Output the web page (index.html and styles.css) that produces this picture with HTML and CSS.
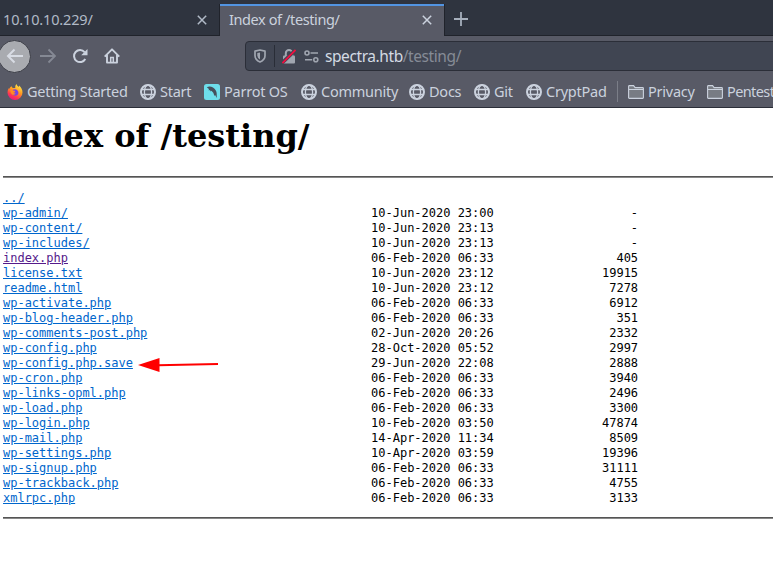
FILE: index.html
```html
<!DOCTYPE html>
<html lang="en">
<head>
<meta charset="utf-8">
<title>Index of /testing/</title>
<link rel="stylesheet" href="styles.css">
</head>
<body>
<svg width="0" height="0" class="defs">
  <symbol id="globe" viewBox="0 0 16 16"><g fill="none" stroke="currentColor"><circle cx="8" cy="8" r="7" stroke-width="2"/><ellipse cx="8" cy="8" rx="3.6" ry="7" stroke-width="1.3"/><path d="M2 5.5h12M2 10.5h12" stroke-width="1.4"/></g></symbol>
  <symbol id="folder" viewBox="0 0 16 16"><path d="M.6 13.8V2.400q0-.8.8-.8h4.200l1.500 2h7.500q.8 0 .8.8v9.400q0 .6-.8.6H1.400q-.8 0-.8-.6z" fill="#787c84" stroke="currentColor" stroke-width="1.1"/><path d="M1 5.500h14" fill="none" stroke="currentColor"/></symbol>
  <symbol id="close" viewBox="0 0 10 10"><path d="M.8.8l8.4 8.4M9.2.8L.8 9.2" stroke="currentColor" stroke-width="1.5"/></symbol>
</svg>
<header class="browser">
  <div class="tabs">
    <div class="tab"><span>10.10.10.229/</span><svg class="close"><use href="#close"/></svg></div>
    <div class="tab active"><span>Index of /testing/</span><svg class="close"><use href="#close"/></svg></div>
    <svg class="plus" viewBox="0 0 14 14"><path d="M7 0v14M0 7h14" stroke="currentColor" stroke-width="1.8"/></svg>
  </div>
  <div class="toolbar">
    <div class="back"><svg width="18" height="16" viewBox="0 0 18 16"><path d="M17 8H2M8.500 1.500L2 8l6.500 6.500" fill="none" stroke="currentColor" stroke-width="2"/></svg></div>
    <svg class="forward" viewBox="0 0 16 16"><path d="M0 8h15M8.500 1.500L15 8l-6.500 6.500" fill="none" stroke="currentColor" stroke-width="1.800"/></svg>
    <svg class="reload" viewBox="0 0 16 16"><path d="M12.600 4.200A6 6 0 1 0 13.300 11" fill="none" stroke="currentColor" stroke-width="2"/><path d="M15.500 1v6.300H9.200z" fill="currentColor"/></svg>
    <svg class="home" viewBox="0 0 16 16"><path d="M.7 8.600L8 1.300l7.300 7.300M3 7v7.600h10V7" fill="none" stroke="currentColor" stroke-width="1.900" stroke-linejoin="round"/><path d="M6.700 14V9.500h2.600v5" fill="none" stroke="currentColor" stroke-width="1.500"/></svg>
    <div class="url">
      <svg class="shield" viewBox="0 0 12 14"><path d="M1 2.200L6 1l5 1.200v4.500q0 4-5 6.300Q1 10.700 1 6.700z" fill="none" stroke="currentColor" stroke-width="1.700" stroke-linejoin="round"/><path d="M6 3.500v7q-2.700-1.500-2.700-4V4z" fill="currentColor"/></svg>
      <i class="divider"></i>
      <svg class="lock" viewBox="0 0 14 15"><path d="M3.800 7V4.300a3.200 3.200 0 0 1 6.400 0V7" fill="none" stroke="currentColor" stroke-width="2"/><rect x="1" y="6.500" width="12" height="8" rx="1" fill="currentColor"/><path d="M0 14L13.500 1" stroke="#414550" stroke-width="3.600"/><path d="M.4 14.200L13.600 1" stroke="#f20d40" stroke-width="1.800"/></svg>
      <svg class="perms" viewBox="0 0 15 13"><g fill="none" stroke="currentColor" stroke-width="1.600"><circle cx="3" cy="3" r="2"/><circle cx="11.800" cy="9.800" r="2"/><path d="M6.500 3H14M1 9.800h7.200"/></g></svg>
      <span class="address">spectra.htb<em>/testing/</em></span>
    </div>
  </div>
  <nav class="bookmarks">
    <a><svg viewBox="0 0 16 16"><defs><linearGradient id="fire" x1=".8" y1="0" x2=".3" y2="1"><stop stop-color="#fff44f"/><stop offset=".45" stop-color="#ff9820"/><stop offset=".75" stop-color="#ff3850"/><stop offset="1" stop-color="#e31587"/></linearGradient></defs><path d="M4.400 2.200L5.700 4.100q1.500-.4 2.500 0Q7.800 2 9.300 0q.8 2 2.600 3l.1-1.400q3.500 3 3.500 6.900A7.500 7.500 0 0 1 .5 8.500q0-2.700 1.600-4.700l.3 1.100q.7-2 2-2.700z" fill="url(#fire)"/><path d="M5 6.200q4-2.400 6 .7 1.300 3.200-1.400 4.600-3 .7-4.500-2.100 1.700.9 3-.7L5 7.700z" fill="#7542e5"/><path d="M3.200 6.300q2-1 3 .3l2.200.4q-.3 1.300-2.200 1.500.8 1.500 2.600.9-2 2.400-4.200.5-1.300-1.300-1.400-3.600z" fill="#ff8c22"/></svg>Getting Started</a>
    <a><svg><use href="#globe"/></svg>Start</a>
    <a><svg viewBox="0 0 16 16"><rect width="16" height="16" rx="2.500" fill="#6edeeb"/><path d="M2.800 3.200Q6 1.800 9 3.600q3.500 2.400 3.700 6l.1 4.400-1.700-3-.6 1Q9.600 8 7.400 6.700l-.8.7-.6-1.300-1.300.3.200-1.500z" fill="#45505c"/></svg>Parrot OS</a>
    <a><svg><use href="#globe"/></svg>Community</a>
    <a><svg><use href="#globe"/></svg>Docs</a>
    <a><svg><use href="#globe"/></svg>Git</a>
    <a><svg><use href="#globe"/></svg>CryptPad</a>
    <i class="separator"></i>
    <a><svg><use href="#folder"/></svg>Privacy</a>
    <a class="last"><svg><use href="#folder"/></svg>Pentest</a>
  </nav>
</header>
<main>
<h1>Index of /testing/</h1>
<hr>
<pre><a>../</a>
<a>wp-admin/</a>                                          10-Jun-2020 23:00                   -
<a>wp-content/</a>                                        10-Jun-2020 23:13                   -
<a>wp-includes/</a>                                       10-Jun-2020 23:13                   -
<a class="visited">index.php</a>                                          06-Feb-2020 06:33                 405
<a>license.txt</a>                                        10-Jun-2020 23:12               19915
<a>readme.html</a>                                        10-Jun-2020 23:12                7278
<a>wp-activate.php</a>                                    06-Feb-2020 06:33                6912
<a>wp-blog-header.php</a>                                 06-Feb-2020 06:33                 351
<a>wp-comments-post.php</a>                               02-Jun-2020 20:26                2332
<a>wp-config.php</a>                                      28-Oct-2020 05:52                2997
<a class="marked">wp-config.php.save<svg class="arrow" viewBox="0 0 82 16"><path d="M20 8.200L80 7" stroke="#f00" stroke-width="2"/><path d="M0 8L21.500 1v14z" fill="#f00"/></svg></a>                                 29-Jun-2020 22:08                2888
<a>wp-cron.php</a>                                        06-Feb-2020 06:33                3940
<a>wp-links-opml.php</a>                                  06-Feb-2020 06:33                2496
<a>wp-load.php</a>                                        06-Feb-2020 06:33                3300
<a>wp-login.php</a>                                       10-Feb-2020 03:50               47874
<a>wp-mail.php</a>                                        14-Apr-2020 11:34                8509
<a>wp-settings.php</a>                                    10-Apr-2020 03:59               19396
<a>wp-signup.php</a>                                      06-Feb-2020 06:33               31111
<a>wp-trackback.php</a>                                   06-Feb-2020 06:33                4755
<a>xmlrpc.php</a>                                         06-Feb-2020 06:33                3133
</pre>
<hr>
</main>
</body>
</html>
```

FILE: styles.css
```css
* { box-sizing: border-box; }
body { margin: 0; background: #fff; overflow: hidden; }
svg { flex: none; display: block; }
.defs { position: absolute; }
.browser { height: 108px; background: #585a66; color: #cbd2de; border-bottom: 1px solid #2b2e38; font: 14.5px/20px "Noto Sans", sans-serif; white-space: nowrap; }
.tabs { display: flex; height: 36px; background: #2f343f; border-bottom: 1px solid #20232b; }
.tab { display: flex; justify-content: space-between; align-items: center; width: 220px; height: 36px; padding: 4px 13px 0 3px; color: #b1bac7; letter-spacing: -0.15px; border-bottom: 1px solid #20232b; }
.tab.active { width: 224px; margin-top: 4px; height: 32px; padding: 0 12px 2px 9px; background: #585a66; color: #cbd2de; border-top: 2px solid #5294e2; border-bottom: 0; box-shadow: -1px 0 #20232b, 1px 0 #20232b; letter-spacing: -0.4px; }
.tab span { padding-bottom: 2px; }
.close { width: 10px; height: 10px; }
.plus { width: 14px; height: 14px; margin: 12px 0 0 10px; color: #a6afbc; }
.toolbar { display: flex; align-items: center; height: 40px; }
.back { display: grid; place-items: center; flex: none; width: 33px; height: 33px; margin-left: -2px; border: 1px solid #3c3e47; border-radius: 50%; background: #a9abb0; color: #d8dce4; }
.forward { width: 16px; height: 16px; margin-left: 9px; color: #858994; }
.reload { width: 16px; height: 16px; margin-left: 16px; }
.home { width: 16px; height: 16px; margin-left: 16px; }
.url { display: flex; align-items: center; width: 540px; height: 30px; margin-left: 125px; padding-left: 8px; border: 1px solid #2b2e38; border-radius: 4px; background: #404552; color: #a0a6b0; flex: none; }
.shield { width: 12px; height: 14px; }
.divider { width: 1px; height: 22px; margin: 0 7px 0 8px; background: #292d37; }
.lock { width: 14px; height: 15px; }
.perms { width: 15px; height: 13px; margin-left: 8px; }
.address { margin-left: 6px; color: #d3dae3; font-size: 15.5px; letter-spacing: -0.42px; }
.address em { color: #858b96; font-style: normal; }
.bookmarks { display: grid; grid-template-columns: 133px 64px 97px 108px 65px 52px 91px 11px 79px 80px; align-items: center; height: 31px; padding-left: 7px; letter-spacing: -0.24px; }
.bookmarks a { display: flex; align-items: flex-start; gap: 4px; height: 16px; line-height: 14px; }
.bookmarks .last { letter-spacing: -0.6px; }
.bookmarks svg { width: 16px; height: 16px; }
.separator { width: 1px; height: 21px; background: #7b7e88; }
main { padding: 0 0 0 3px; }
h1 { margin: 9px 0 21px; font: bold 32px/38px "DejaVu Serif", serif; color: #000; }
hr { height: 2px; margin: 0; border: 0; border-top: 1px solid #555; background: #888; }
pre { margin: 13px 0 11px; font: 12px/15px "DejaVu Sans Mono", monospace; letter-spacing: -0.008px; color: #000; }
pre a { color: #0066cc; text-decoration: underline; }
pre .visited { color: #551a8b; }
.marked { position: relative; }
.arrow { position: absolute; left: 135px; top: 1px; width: 82px; height: 16px; }
```
